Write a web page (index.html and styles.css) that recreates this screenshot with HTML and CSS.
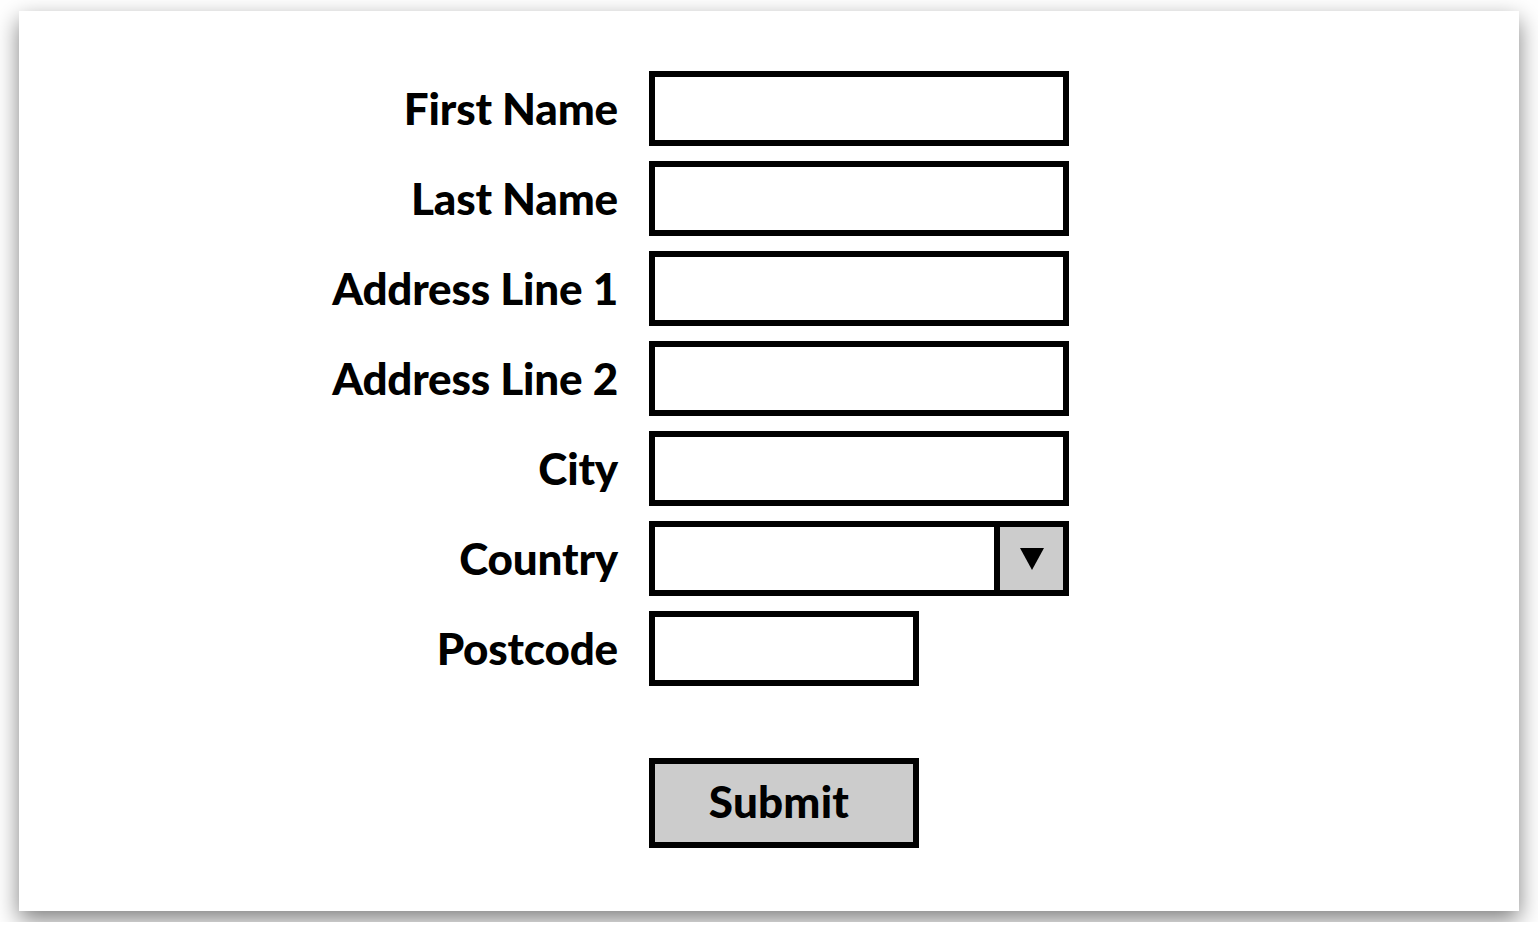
FILE: index.html
```html
<!DOCTYPE html>
<html lang="en">
<head>
<meta charset="utf-8">
<title>Address Form</title>
<link rel="stylesheet" href="styles.css">
</head>
<body>
<div class="card">
  <form class="form">
    <label class="label" for="fn">First Name</label>
    <input class="field" id="fn" type="text">
    <label class="label" for="ln">Last Name</label>
    <input class="field" id="ln" type="text">
    <label class="label" for="a1">Address Line 1</label>
    <input class="field" id="a1" type="text">
    <label class="label" for="a2">Address Line 2</label>
    <input class="field" id="a2" type="text">
    <label class="label" for="city">City</label>
    <input class="field" id="city" type="text">
    <label class="label" for="country">Country</label>
    <div class="select">
      <select class="select-box" id="country"><option></option></select>
      <span class="select-btn"><span class="tri"></span></span>
    </div>
    <label class="label" for="pc">Postcode</label>
    <input class="field field-short" id="pc" type="text">
    <button class="submit" type="button">Submit</button>
  </form>
</div>
</body>
</html>
```

FILE: styles.css
```css
html, body {
  margin: 0;
  padding: 0;
  background: #fff;
}
body {
  padding: 11px 19px;
  font-family: "Lato", "Open Sans", sans-serif;
}
.card {
  width: 1500px;
  height: 900px;
  background: #fff;
  box-shadow: 0 9px 22px rgba(0, 0, 0, 0.5);
  box-sizing: border-box;
  padding-top: 60px;
}
.form {
  display: grid;
  grid-template-columns: 599px 420px;
  grid-auto-rows: 75px;
  column-gap: 31px;
  row-gap: 15px;
}
.label {
  display: flex;
  align-items: center;
  justify-content: flex-end;
  font-weight: 900;
  font-size: 44px;
  letter-spacing: -0.2px;
  color: #000;
  margin-top: -1px;
}
.field {
  box-sizing: border-box;
  width: 420px;
  height: 75px;
  border: 6px solid #000;
  background: #fff;
  margin: 0;
  padding: 0 12px;
  outline: none;
  border-radius: 0;
}
.field-short {
  width: 270px;
}
.select {
  box-sizing: border-box;
  display: flex;
  height: 75px;
  border: 6px solid #000;
  background: #fff;
}
.select-box {
  flex: 1;
  appearance: none;
  -webkit-appearance: none;
  border: 0;
  background: transparent;
  outline: none;
  margin: 0;
}
.select-btn {
  width: 63px;
  border-left: 6px solid #000;
  background: #ccc;
  display: flex;
  align-items: center;
  justify-content: center;
}
.tri {
  width: 0;
  height: 0;
  border-left: 12px solid transparent;
  border-right: 12px solid transparent;
  border-top: 22px solid #000;
}
.submit {
  grid-column: 2;
  margin-top: 57px;
  box-sizing: border-box;
  width: 270px;
  height: 90px;
  border: 6px solid #000;
  background: #ccc;
  border-radius: 0;
  font-family: "Lato", "Open Sans", sans-serif;
  font-weight: 900;
  font-size: 44px;
  letter-spacing: 0.2px;
  color: #000;
  padding: 0 10px 4px 0;
}
```
